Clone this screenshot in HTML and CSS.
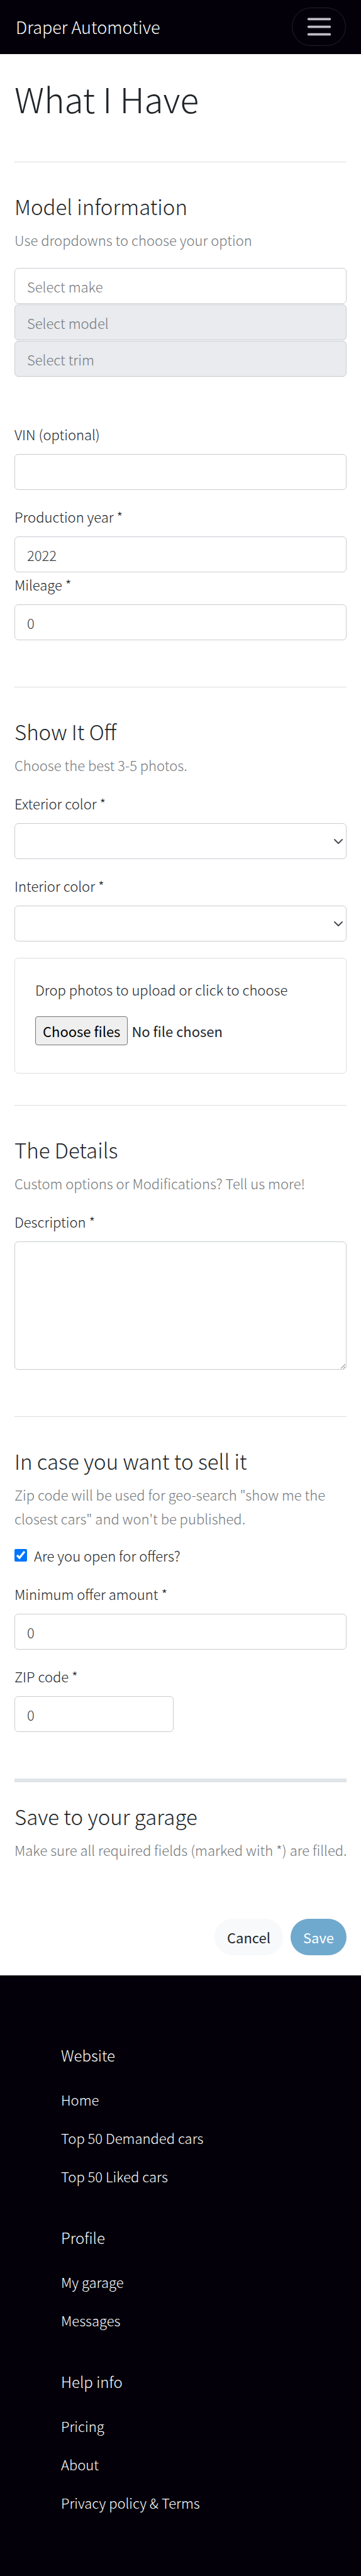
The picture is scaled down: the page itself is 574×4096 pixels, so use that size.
FILE: index.html
```html
<!DOCTYPE html>
<html lang="en">
<head>
<meta charset="utf-8">
<meta name="viewport" content="width=device-width, initial-scale=1">
<title>What I Have - Draper Automotive</title>
<link rel="stylesheet" href="styles.css">
</head>
<body>
<header class="navbar">
  <a class="brand" href="#">Draper Automotive</a>
  <button class="menu-button" type="button" aria-label="Toggle navigation">
    <svg class="menu-icon" viewBox="0 0 48 48" aria-hidden="true"><path d="M6 11h36M6 24h36M6 37h36"/></svg>
  </button>
</header>

<main class="page">
  <h1 class="page-title">What I Have</h1>
  <form class="car-form">
    <section class="section">
      <h2 class="section-title">Model information</h2>
      <p class="hint">Use dropdowns to choose your option</p>
      <div class="model-picker">
        <input class="control" type="text" placeholder="Select make" aria-label="Make">
        <input class="control" type="text" placeholder="Select model" aria-label="Model" disabled>
        <input class="control" type="text" placeholder="Select trim" aria-label="Trim" disabled>
      </div>
      <div class="field">
        <label class="label" for="vin">VIN (optional)</label>
        <input class="control" id="vin" type="text">
      </div>
      <div class="field">
        <label class="label" for="year">Production year *</label>
        <input class="control" id="year" type="text" inputmode="numeric" value="2022">
      </div>
      <div class="field field-attached">
        <label class="label" for="mileage">Mileage *</label>
        <input class="control" id="mileage" type="text" inputmode="numeric" value="0">
      </div>
    </section>

    <section class="section">
      <h2 class="section-title">Show It Off</h2>
      <p class="hint">Choose the best 3-5 photos.</p>
      <div class="field">
        <label class="label" for="exterior">Exterior color *</label>
        <div class="select-wrap">
          <select class="control" id="exterior"><option></option></select>
          <svg class="chevron" viewBox="0 0 16 16" aria-hidden="true"><path d="M2 5l6 6 6-6"/></svg>
        </div>
      </div>
      <div class="field">
        <label class="label" for="interior">Interior color *</label>
        <div class="select-wrap">
          <select class="control" id="interior"><option></option></select>
          <svg class="chevron" viewBox="0 0 16 16" aria-hidden="true"><path d="M2 5l6 6 6-6"/></svg>
        </div>
      </div>
      <div class="upload">
        <p class="upload-text">Drop photos to upload or click to choose</p>
        <div class="file-row">
          <input class="file-input" id="photos" type="file" multiple>
          <label class="file-button" for="photos">Choose files</label>
          <span class="file-name">No file chosen</span>
        </div>
      </div>
    </section>

    <section class="section">
      <h2 class="section-title">The Details</h2>
      <p class="hint">Custom options or Modifications? Tell us more!</p>
      <div class="field">
        <label class="label" for="description">Description *</label>
        <textarea class="control control-area" id="description"></textarea>
      </div>
    </section>

    <section class="section">
      <h2 class="section-title">In case you want to sell it</h2>
      <p class="hint">Zip code will be used for geo-search "show me the closest cars" and won't be published.</p>
      <div class="check-row">
        <input class="check" id="offers" type="checkbox" checked>
        <label class="check-label" for="offers">Are you open for offers?</label>
      </div>
      <div class="field">
        <label class="label" for="min-offer">Minimum offer amount *</label>
        <input class="control" id="min-offer" type="text" inputmode="numeric" value="0">
      </div>
      <div class="field field-half">
        <label class="label" for="zip">ZIP code *</label>
        <input class="control" id="zip" type="text" inputmode="numeric" value="0">
      </div>
    </section>

    <section class="section section-save">
      <h2 class="section-title">Save to your garage</h2>
      <p class="hint hint-line">Make sure all required fields (marked with *) are filled.</p>
      <div class="actions">
        <button class="button button-light" type="button">Cancel</button>
        <button class="button button-primary" type="submit">Save</button>
      </div>
    </section>
  </form>
</main>

<footer class="footer">
  <nav class="footer-group" aria-labelledby="f-website">
    <h3 class="footer-title" id="f-website">Website</h3>
    <a class="footer-link" href="#">Home</a>
    <a class="footer-link" href="#">Top 50 Demanded cars</a>
    <a class="footer-link" href="#">Top 50 Liked cars</a>
  </nav>
  <nav class="footer-group" aria-labelledby="f-profile">
    <h3 class="footer-title" id="f-profile">Profile</h3>
    <a class="footer-link" href="#">My garage</a>
    <a class="footer-link" href="#">Messages</a>
  </nav>
  <nav class="footer-group" aria-labelledby="f-help">
    <h3 class="footer-title" id="f-help">Help info</h3>
    <a class="footer-link" href="#">Pricing</a>
    <a class="footer-link" href="#">About</a>
    <a class="footer-link" href="#">Privacy policy &amp; Terms</a>
  </nav>
</footer>
</body>
</html>
```
FILE: styles.css
```css
:root {
  --ink: #212529;
  --muted: #74787b;
  --line: #dadee1;
  --control-line: #c8ccd0;
  --night: #03000a;
}

* {
  box-sizing: border-box;
}

body {
  margin: 0;
  min-height: 100vh;
  display: flex;
  flex-direction: column;
  background: #fff;
  color: var(--ink);
  font-family: "Noto Sans CJK SC", "Noto Sans CJK JP", "Open Sans", sans-serif;
  font-size: 22px;
  font-weight: 300;
  line-height: 38px;
}

h1, h2, h3, p {
  margin: 0;
  font-weight: 300;
}

input, select, textarea, button {
  font: inherit;
  color: inherit;
}

.navbar {
  display: flex;
  align-items: center;
  justify-content: space-between;
  padding: 12px 24px 13px 25px;
  background: var(--night);
}

.brand {
  color: #fff;
  font-size: 27px;
  text-decoration: none;
}

.menu-button {
  display: grid;
  place-items: center;
  width: 86px;
  height: 61px;
  padding: 0;
  border: 1px solid #24212a;
  border-radius: 32px;
  background: transparent;
}

.menu-icon {
  width: 45px;
  height: 45px;
  fill: none;
  stroke: #bfbdc5;
  stroke-width: 4;
  stroke-linecap: round;
}

.page {
  padding: 36px 23px 32px;
}

.page-title {
  font-size: 55px;
  line-height: 68px;
}

.car-form {
  margin-top: 67px;
}

.section {
  padding: 50px 0 74px;
  border-top: 1px solid var(--line);
}

.section:has(.upload) {
  padding-bottom: 50px;
}

.section-title {
  font-size: 33px;
  line-height: 40px;
}

.hint {
  margin-top: 14px;
  color: var(--muted);
}

.hint-line {
  white-space: nowrap;
}

.model-picker {
  display: flex;
  flex-direction: column;
  gap: 1px;
  margin: 26px 0 72px;
}

.field {
  margin-top: 23px;
}

.field-attached {
  margin-top: 0;
}

.field-half {
  width: 48%;
}

.label {
  display: block;
  margin-bottom: 13px;
}

.control {
  display: block;
  width: 100%;
  height: 57px;
  padding: 0 19px;
  border: 1px solid var(--control-line);
  border-radius: 6px;
  background: #fff;
  color: #363b40;
  appearance: none;
}

.control::placeholder {
  color: var(--muted);
  opacity: 1;
}

.control:disabled {
  background: #e9ebef;
}

.control-area {
  height: 204px;
  resize: vertical;
}

.select-wrap {
  display: grid;
  align-items: center;
}

.select-wrap > * {
  grid-area: 1 / 1;
}

.chevron {
  justify-self: end;
  width: 16px;
  height: 16px;
  margin-right: 5px;
  fill: none;
  stroke: #4a4d51;
  stroke-width: 2;
  stroke-linecap: round;
  stroke-linejoin: round;
  pointer-events: none;
}

.upload {
  margin-top: 26px;
  padding: 30px 32px 44px;
  border: 1px solid var(--line);
  border-radius: 6px;
}

.file-row {
  display: flex;
  align-items: center;
  gap: 6px;
  margin-top: 24px;
  font-weight: 400;
}

.file-input {
  position: absolute;
  width: 1px;
  height: 1px;
  opacity: 0;
}

.file-button {
  padding: 3px 11px;
  border: 1px solid #767676;
  border-radius: 4px;
  background: #efefef;
  color: #000;
}

.check-row {
  display: flex;
  align-items: center;
  gap: 11px;
  margin-top: 21px;
}

.check {
  width: 20px;
  height: 20px;
  margin: 0;
  accent-color: #0075ff;
}

.section-save {
  padding: 34px 0 0;
  border-top: 6px solid #dfe5e8;
}

.actions {
  display: flex;
  justify-content: flex-end;
  gap: 12px;
  margin-top: 91px;
}

.button {
  height: 58px;
  padding: 0 20px;
  border: 0;
  border-radius: 29px;
  font-weight: 400;
}

.button-light {
  background: #f8f9fb;
}

.button-primary {
  background: #70a9ce;
  color: #fff;
}

.footer {
  display: flex;
  flex-direction: column;
  flex-grow: 1;
  gap: 60px;
  padding: 108px 97px 76px;
  background: var(--night);
  color: #fff;
}

.footer-group {
  display: flex;
  flex-direction: column;
  align-items: flex-start;
  gap: 23px;
}

.footer-title {
  margin-bottom: 9px;
  font-size: 24px;
  line-height: 38px;
}

.footer-link {
  color: #fff;
  text-decoration: none;
}
```
